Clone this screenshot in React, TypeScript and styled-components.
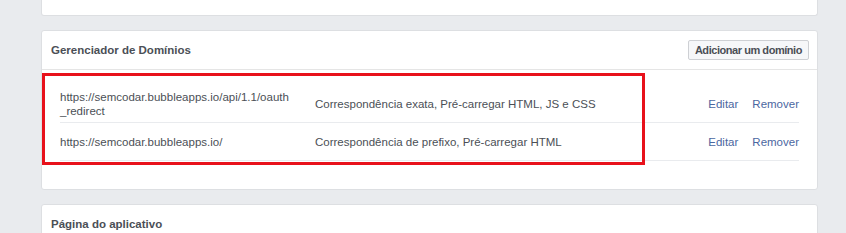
import React from "react";
import styled, { createGlobalStyle } from "styled-components";

const Global = createGlobalStyle`
  html, body { margin: 0; padding: 0; background: #e9ebee; }
  body { font-family: "Liberation Sans", Arial, Helvetica, sans-serif; font-size: 12px; color: #4b4f56; }
  * { box-sizing: border-box; }
`;

const Page = styled.div`
  width: 846px;
  height: 233px;
  overflow: hidden;
  padding-left: 41px;
  display: flex;
  flex-direction: column;
  gap: 14px;
`;

const Card = styled.div<{ $h?: number }>`
  position: relative;
  width: 777px;
  background: #fff;
  border: 1px solid #dddfe2;
  border-radius: 3px;
  flex-shrink: 0;
  ${(p) => (p.$h ? `height: ${p.$h}px;` : "")}
`;

const TopCard = styled(Card)`
  height: 17px;
  margin-top: -1px;
  border-top: none;
  border-radius: 0 0 3px 3px;
`;

const Header = styled.div<{ $plain?: boolean }>`
  height: 39px;
  display: flex;
  align-items: center;
  justify-content: space-between;
  padding: 0 8px 0 9px;
  border-bottom: 1px solid ${(p) => (p.$plain ? "transparent" : "#e5e5e5")};
`;

const Title = styled.div`
  font-weight: bold;
  font-size: 11.5px;
  color: #4b4f56;
`;

const Button = styled.button`
  height: 20px;
  padding: 0 6px;
  background: #f6f7f9;
  border: 1px solid #ced0d4;
  border-radius: 2px;
  font-family: inherit;
  font-weight: bold;
  font-size: 11px;
  letter-spacing: -0.45px;
  color: #4b4f56;
`;

const Body = styled.div`
  padding: 15px 18px 27px 18px;
`;

const Row = styled.div<{ $h: number }>`
  display: grid;
  grid-template-columns: 255px 1fr auto;
  align-items: center;
  height: ${(p) => p.$h}px;
  border-bottom: 1px solid #e9ebee;
  line-height: 14px;
  font-size: 11.5px;
  color: #4b4f56;
`;

const Url = styled.div`
  padding-right: 10px;
`;

const Piece = styled.span`
  display: inline-block;
  white-space: nowrap;
`;

const Actions = styled.div`
  display: flex;
  gap: 14px;
`;

const Link = styled.a`
  color: #4b67a1;
  text-decoration: none;
  cursor: pointer;
`;

const Highlight = styled.div`
  position: absolute;
  left: 0;
  top: 42px;
  width: 603px;
  height: 92px;
  border: 3px solid #e8111b;
  pointer-events: none;
`;

const rows = [
  {
    url: ["https://semcodar.bubbleapps.io/api/1.1/oauth", "_redirect"],
    desc: "Correspondência exata, Pré-carregar HTML, JS e CSS",
    h: 38,
  },
  {
    url: ["https://semcodar.bubbleapps.io/"],
    desc: "Correspondência de prefixo, Pré-carregar HTML",
    h: 38,
  },
];

export default function App() {
  return (
    <>
      <Global />
      <Page>
        <TopCard />
        <Card $h={160}>
          <Header>
            <Title>Gerenciador de Domínios</Title>
            <Button>Adicionar um domínio</Button>
          </Header>
          <Body>
            {rows.map((r, i) => (
              <Row key={i} $h={r.h}>
                <Url>
                  {r.url.map((u, j) => (
                    <Piece key={j}>{u}</Piece>
                  ))}
                </Url>
                <div>{r.desc}</div>
                <Actions>
                  <Link>Editar</Link>
                  <Link>Remover</Link>
                </Actions>
              </Row>
            ))}
          </Body>
          <Highlight />
        </Card>
        <Card $h={60}>
          <Header $plain>
            <Title>Página do aplicativo</Title>
          </Header>
        </Card>
      </Page>
    </>
  );
}
